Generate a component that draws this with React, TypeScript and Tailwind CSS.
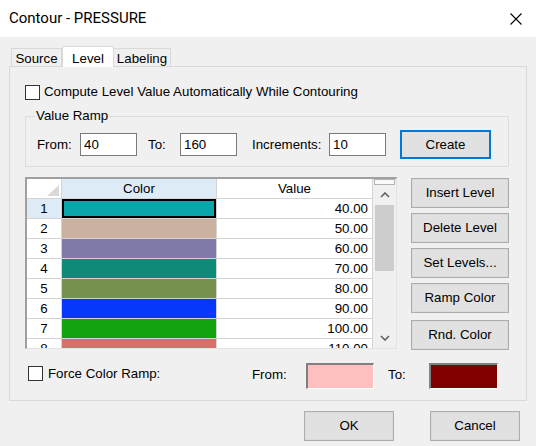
import React from 'react'

type Level = { id: number; swatch: string; value: string }

const levels: Level[] = [
  { id: 1, swatch: 'bg-[#0aa6ab]', value: '40.00' },
  { id: 2, swatch: 'bg-[#cbb1a0]', value: '50.00' },
  { id: 3, swatch: 'bg-[#7f7aa8]', value: '60.00' },
  { id: 4, swatch: 'bg-[#0e8a78]', value: '70.00' },
  { id: 5, swatch: 'bg-[#76924e]', value: '80.00' },
  { id: 6, swatch: 'bg-[#0538fb]', value: '90.00' },
  { id: 7, swatch: 'bg-[#13a30f]', value: '100.00' },
  { id: 8, swatch: 'bg-[#d5716a]', value: '110.00' },
]

const sideButtons = ['Insert Level', 'Delete Level', 'Set Levels...', 'Ramp Color']

function CheckBox() {
  return <span className="block w-[15px] h-[15px] border border-[#333] bg-white shrink-0" />
}

function WinButton({ label, className = '' }: { label: string; className?: string }) {
  return (
    <button
      className={
        'h-[30px] bg-[#e1e1e1] border border-[#adadad] shadow-[inset_0_0_0_1px_#dadada] text-[13.3px] text-black ' +
        className
      }
    >
      {label}
    </button>
  )
}

function TextBox({ value }: { value: string }) {
  return (
    <div className="w-[57px] h-[23px] border border-[#7a7a7a] bg-white pl-[3px] text-[13.3px] leading-[21px]">
      {value}
    </div>
  )
}

function LevelGrid() {
  return (
    <div className="w-[372px] h-[172px] flex border-t-2 border-l-2 border-t-[#a0a0a0] border-l-[#a0a0a0] border-r border-b border-r-[#e3e3e3] border-b-[#e3e3e3] bg-white">
      <div className="w-[346px] overflow-hidden flex flex-col text-[13.3px] text-black">
        {/* header */}
        <div className="h-[20px] shrink-0 flex border-b border-[#d4d4d4]">
          <div className="w-[35px] border-r border-[#d4d4d4] flex items-end justify-end pr-[2px] pb-[2px]">
            <svg width="12" height="11" viewBox="0 0 12 11">
              <polygon points="0,11 12,0 12,11" fill="#d9d9d9" />
            </svg>
          </div>
          <div className="w-[155px] border-r border-[#d4d4d4] bg-[#ddebf7] text-center leading-[19px]">Color</div>
          <div className="w-[156px] border-r border-[#d4d4d4] text-center leading-[19px]">Value</div>
        </div>
        {levels.map(l => (
          <div key={l.id} className="h-[20px] shrink-0 flex border-b border-[#d4d4d4]">
            <div
              className={
                'w-[35px] border-r border-[#d4d4d4] text-center leading-[19px] ' +
                (l.id === 1 ? 'bg-[#ddebf7]' : '')
              }
            >
              {l.id}
            </div>
            <div
              className={
                'w-[155px] border-r border-[#d4d4d4] ' +
                l.swatch +
                (l.id === 1 ? ' shadow-[inset_0_0_0_2px_#000]' : '')
              }
            />
            <div className="w-[156px] border-r border-[#d4d4d4] text-right pr-[4px] leading-[19px]">{l.value}</div>
          </div>
        ))}
      </div>
      {/* scrollbar */}
      <div className="flex-1 bg-[#f0f0f0] flex flex-col">
        <div className="h-[6px] mx-[1px] border border-[#b4b4b4] bg-[#fafafa] shrink-0" />
        <div className="h-[20px] flex items-center justify-center shrink-0">
          <svg width="10" height="6" viewBox="0 0 10 6">
            <polyline points="1,5 5,1 9,5" fill="none" stroke="#606060" strokeWidth="1.6" />
          </svg>
        </div>
        <div className="h-[66px] mx-[2px] bg-[#cdcdcd] shrink-0" />
        <div className="flex-1" />
        <div className="h-[20px] flex items-center justify-center shrink-0">
          <svg width="10" height="6" viewBox="0 0 10 6">
            <polyline points="1,1 5,5 9,1" fill="none" stroke="#606060" strokeWidth="1.6" />
          </svg>
        </div>
      </div>
    </div>
  )
}

export default function App() {
  return (
    <div className="w-[536px] h-[446px] bg-[#f0f0f0] flex flex-col font-['Liberation_Sans',Arial,sans-serif] text-black overflow-hidden">
      {/* title bar */}
      <div className="h-[37px] bg-white flex items-center justify-between pl-[9px] pr-[14px] shrink-0">
        <span className="font-['Roboto',sans-serif] text-[15px] text-black">Contour - PRESSURE</span>
        <svg width="12" height="12" viewBox="0 0 12 12">
          <path d="M0.5 0.5 L11.5 11.5 M11.5 0.5 L0.5 11.5" stroke="#000" strokeWidth="1.1" />
        </svg>
      </div>

      {/* tabs */}
      <div className="mt-[9px] ml-[11px] h-[20px] flex items-end text-[13.3px]">
        <div className="w-[51px] h-[18px] border-l border-t border-r border-[#d9d9d9] flex items-center justify-center leading-none pt-[2px]">
          Source
        </div>
        <div className="w-[52px] h-[21px] -mb-px relative z-10 bg-white border-l border-t border-r border-[#d9d9d9] flex items-start justify-center pt-[2px]">
          Level
        </div>
        <div className="w-[57px] h-[18px] border-t border-r border-[#d9d9d9] flex items-center justify-center leading-none pt-[2px]">
          Labeling
        </div>
      </div>

      {/* tab panel */}
      <div className="mx-[9px] h-[335px] border border-[#d9d9d9] bg-[#f0f0f0] flex flex-col pt-[17px] text-[13.3px]">
        <div className="ml-[15px] flex items-center gap-[4px] h-[16px]">
          <CheckBox />
          <span>Compute Level Value Automatically While Contouring</span>
        </div>

        <fieldset className="mt-[8px] ml-[15px] w-[484px] border border-[#dcdcdc] pl-[11px] pb-[7px] pt-[6px]">
          <legend className="px-[1px] -ml-[2px] leading-[16px]">Value Ramp</legend>
          <div className="flex items-center h-[29px]">
            <span className="w-[43px]">From:</span>
            <TextBox value="40" />
            <span className="ml-[11px] w-[32px]">To:</span>
            <TextBox value="160" />
            <span className="ml-[15px] w-[77px]">Increments:</span>
            <TextBox value="10" />
            <button className="ml-[14px] w-[91px] h-[29px] bg-[#e1e1e1] border-2 border-[#0078d7] text-[13.3px]">
              Create
            </button>
          </div>
        </fieldset>

        <div className="mt-[10px] ml-[15px] flex items-start">
          <LevelGrid />
          <div className="ml-[14px] pt-[1px] w-[98px] flex flex-col gap-[5px]">
            {sideButtons.map(b => (
              <WinButton key={b} label={b} className="w-[98px]" />
            ))}
            <WinButton label="Rnd. Color" className="w-[98px] mt-[2px]" />
          </div>
        </div>

        <div className="mt-[13px] ml-[18px] flex items-center h-[26px]">
          <div className="w-[224px] flex items-center gap-[5px] -mt-[5px]">
            <CheckBox />
            <span>Force Color Ramp:</span>
          </div>
          <span className="w-[54px] -mt-[3px]">From:</span>
          <div className="w-[68px] h-[26px] border-t-2 border-l-2 border-t-[#808080] border-l-[#808080] border-r border-b border-r-white border-b-white bg-[#ffbfbf]" />
          <span className="ml-[14px] w-[41px] -mt-[3px]">To:</span>
          <div className="w-[69px] h-[26px] border-t-2 border-l-2 border-t-[#808080] border-l-[#808080] border-r border-b border-r-white border-b-white bg-[#800000]" />
        </div>
      </div>

      {/* dialog buttons */}
      <div className="mt-[10px] flex justify-end gap-[36px] pr-[16px]">
        <WinButton label="OK" className="w-[90px]" />
        <WinButton label="Cancel" className="w-[90px]" />
      </div>
    </div>
  )
}
